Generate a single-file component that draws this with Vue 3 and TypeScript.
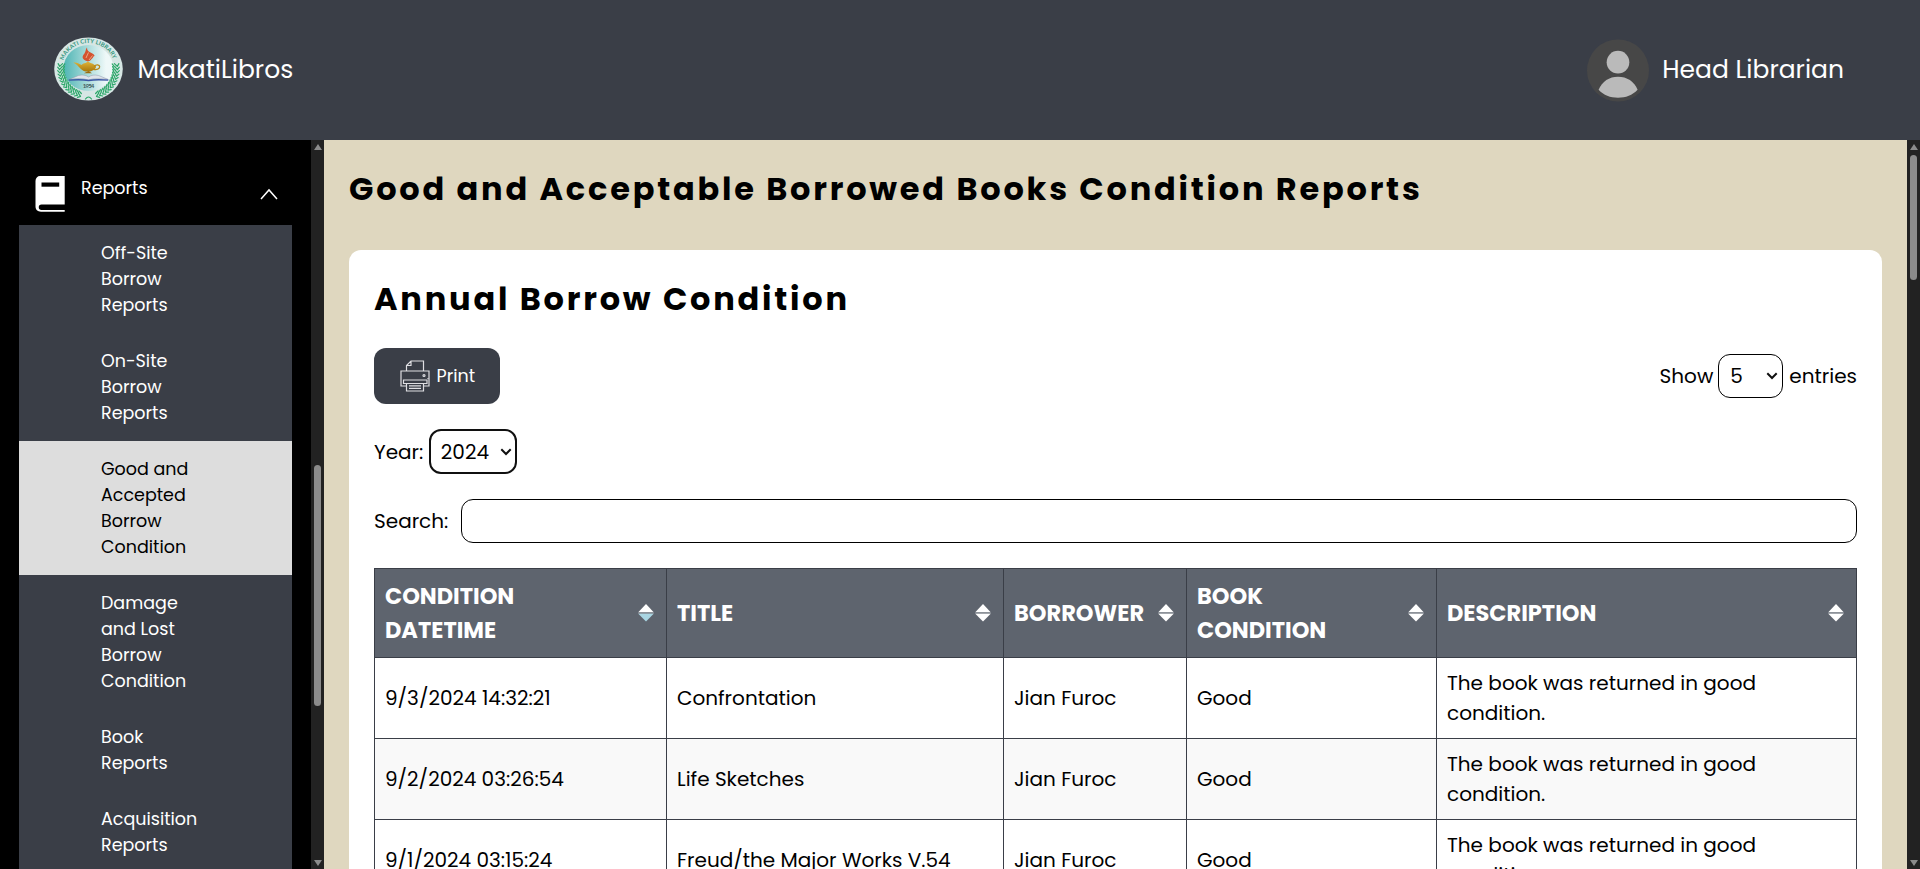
<script setup lang="ts">
import { ref } from 'vue'

interface MenuItem { lines: string[]; active?: boolean }
interface Column { key: string; lines: string[]; sorted?: boolean }
interface Row { date: string; title: string; borrower: string; condition: string }

const menu: MenuItem[] = [
  { lines: ['Off-Site', 'Borrow', 'Reports'] },
  { lines: ['On-Site', 'Borrow', 'Reports'] },
  { lines: ['Good and', 'Accepted', 'Borrow', 'Condition'], active: true },
  { lines: ['Damage', 'and Lost', 'Borrow', 'Condition'] },
  { lines: ['Book', 'Reports'] },
  { lines: ['Acquisition', 'Reports'] },
]

const columns: Column[] = [
  { key: 'date', lines: ['CONDITION', 'DATETIME'], sorted: true },
  { key: 'title', lines: ['TITLE'] },
  { key: 'borrower', lines: ['BORROWER'] },
  { key: 'condition', lines: ['BOOK', 'CONDITION'] },
  { key: 'description', lines: ['DESCRIPTION'] },
]

const rows: Row[] = [
  { date: '9/3/2024 14:32:21', title: 'Confrontation', borrower: 'Jian Furoc', condition: 'Good' },
  { date: '9/2/2024 03:26:54', title: 'Life Sketches', borrower: 'Jian Furoc', condition: 'Good' },
  { date: '9/1/2024 03:15:24', title: 'Freud/the Major Works V.54', borrower: 'Jian Furoc', condition: 'Good' },
]

const year = ref('2024')
const entries = ref('5')
const search = ref('')

// Leaves of the laurel on the seal: angle measured from the bottom centre.
const leaves = Array.from({ length: 13 }, (_, i) => 16 + i * 6.6)
</script>

<template>
  <div class="page">
    <header class="topbar">
      <div class="brand">
        <svg class="seal" viewBox="0 0 68 64" preserveAspectRatio="none">
          <defs>
            <linearGradient id="seal-disc" x1="0" x2="1">
              <stop offset="0" stop-color="#4fb5b4" />
              <stop offset="0.85" stop-color="#eef8f8" />
            </linearGradient>
            <linearGradient id="lamp" x1="0" y1="0" x2="0" y2="1">
              <stop offset="0" stop-color="#e0b53a" />
              <stop offset="1" stop-color="#a8770b" />
            </linearGradient>
            <path id="seal-arc" d="M9.400 23.500 A26 25.500 0 0 1 58.800 23.500" />
          </defs>
          <ellipse cx="34" cy="32" rx="33.8" ry="31.6" fill="#d6e6e4" />
          <ellipse cx="34" cy="31" rx="24.5" ry="23" fill="url(#seal-disc)" />
          <text class="seal-name">
            <textPath href="#seal-arc" textLength="63">MAKATI CITY LIBRARY</textPath>
          </text>
          <g stroke="#2ba768" stroke-width="1.2" stroke-linecap="round">
            <g v-for="a in leaves" :key="a">
              <g :transform="`rotate(${a} 34 32)`"><path d="M34 60.500l-3-2.600M34 60.500l-2.600 1.800M34 57.500l-3-1.800" /></g>
              <g :transform="`rotate(${-a} 34 32)`"><path d="M34 60.500l3-2.600M34 60.500l2.600 1.800M34 57.500l3-1.800" /></g>
            </g>
            <path d="M31 62q3-4 6 0" fill="none" />
          </g>
          <path d="M33.500 24.500c-6-2-6.500-4.500-3.500-8 1.500-2.500 1-4.500 2.500-6 0 3 1.500 4 3.500 5 3 1.500 3.500 2 4 3.500-1.500 0-1 1.500-3 3-1 1.500-2 2-3.500 2.500z" fill="#d4522f" />
          <path d="M31.500 21l2.500-5.500M34.500 23l3.500-4.500" stroke="#f4c9a8" stroke-width=".7" />
          <path d="M19 25.500c3.500-.5 5 .6 8 2.500q2-2 4-2l2.500-1.500 2.500 1.500q2.500.5 4 2c2.500 1 1.500 4-1.500 5.200q-1.500 1-3 1.300H31c-5-1-6-6-12-9z" fill="url(#lamp)" />
          <path d="M39.500 29.500c2-2.500 5.500-2 5.500.3s-3 3.200-6 2.500" fill="none" stroke="#b88717" stroke-width="1.300" />
          <path d="M29.500 36.300h8l-3.500-2.300z" fill="#9c6b10" />
          <path d="M15 42.500l9-4q6-1.500 10 1.500 4-3 10-1.500l9.500 4q-12-2-19.500.5-8-2.500-19-.5z" fill="#dfe3ea" stroke="#8f98ad" stroke-width=".5" />
          <path d="M14.500 43.200q12-1 19.500.3 8-1.300 19.500-.3" fill="none" stroke="#3a55a4" stroke-width="1.300" />
          <text x="28.300" y="51.500" class="seal-year" textLength="11.500">1954</text>
        </svg>
        <span class="name">MakatiLibros</span>
      </div>
      <div class="account">
        <svg class="avatar" viewBox="0 0 64 64">
          <circle cx="32" cy="32" r="31.500" fill="#474747" />
          <circle cx="32" cy="23.500" r="11.500" fill="#bababa" />
          <path d="M12.300 51.500C16 43 23 38.300 32 38.300s16.500 4.700 19.900 13.200C46.500 57 40 59.600 32 59.600S17.500 57 12.300 51.500z" fill="#bababa" />
        </svg>
        <span class="name">Head Librarian</span>
      </div>
    </header>

    <div class="body">
      <aside class="sidebar">
        <div class="section">
          <svg class="book" viewBox="0 0 30 36">
            <path d="M5 0H29.700V28.500H6.500a2.700 2.700 0 0 0 0 5.500H29.700V35.700H6C2.500 35.700.5 33.500.5 30.500V5C.5 2 2.500 0 5 0z" fill="#fff" />
            <path d="M6.500 6.500h17.700v4.200H6.500z" />
          </svg>
          <span class="section-name">Reports</span>
          <svg class="chevron" viewBox="0 0 18 12"><path d="M1 11l8-9 8 9" fill="none" stroke="#fff" stroke-width="1.500" /></svg>
        </div>
        <nav class="menu">
          <a v-for="(item, i) in menu" :key="i" class="menu-item" :class="{ active: item.active }">
            <span v-for="line in item.lines" :key="line">{{ line }}</span>
          </a>
        </nav>
      </aside>
      <div class="scrollbar side-scroll">
        <i class="arrow up"></i><b class="thumb"></b><i class="arrow down"></i>
      </div>

      <main class="content">
        <h1 class="heading">Good and Acceptable Borrowed Books Condition Reports</h1>
        <section class="card">
          <h2 class="heading">Annual Borrow Condition</h2>
          <div class="tools">
            <button class="print">
              <svg class="printer" viewBox="0 0 30 32" fill="none" stroke="#dedee2" stroke-width="1.200">
                <path d="M6.500 11V5.500L11 1h12.500v10M6.500 5.500H11V1" />
                <path d="M6.500 26H1V11h28v15h-5.500" />
                <path d="M3.500 20h23.500v3.500H3.500z" />
                <path d="M6.500 23.500h17V31h-17zM9 25.800h12M9 28.400h12" />
                <circle cx="24" cy="15.500" r="1" />
                <path d="M28 18v1" />
              </svg>
              <span>Print</span>
            </button>
            <label class="show">
              <span class="show-word">Show</span>
              <span class="picker entries">
                <select v-model="entries"><option>5</option><option>10</option><option>25</option></select>
                <svg class="caret" viewBox="0 0 12 8"><path d="M1.300 1.300L6 6l4.700-4.700" fill="none" stroke="#101010" stroke-width="2" /></svg>
              </span>
              <span class="entries-word">entries</span>
            </label>
          </div>
          <label class="year-row">
            <span class="year-word">Year:</span>
            <span class="picker year">
              <select v-model="year"><option>2024</option></select>
              <svg class="caret" viewBox="0 0 12 8"><path d="M1.300 1.300L6 6l4.700-4.700" fill="none" stroke="#101010" stroke-width="2" /></svg>
            </span>
          </label>
          <label class="search-row">
            <span class="search-word">Search:</span>
            <input v-model="search" class="search" type="text" />
          </label>
          <table class="table">
            <colgroup><col v-for="c in columns" :key="c.key" :class="'col-' + c.key" /></colgroup>
            <thead>
              <tr>
                <th v-for="c in columns" :key="c.key">
                  <div class="th">
                    <span class="th-label"><span v-for="l in c.lines" :key="l">{{ l }}</span></span>
                    <svg class="sort" viewBox="0 0 16 18">
                      <path d="M8 0l7.700 8.200H.3z" fill="#fff" />
                      <path d="M.3 8.200h15.400v1.600H.3z" fill="#8f949c" />
                      <path d="M8 17.500L.3 9.800h15.400z" :fill="c.sorted ? '#a9d5e2' : '#fff'" />
                    </svg>
                  </div>
                </th>
              </tr>
            </thead>
            <tbody>
              <tr v-for="r in rows" :key="r.date">
                <td>{{ r.date }}</td>
                <td>{{ r.title }}</td>
                <td>{{ r.borrower }}</td>
                <td>{{ r.condition }}</td>
                <td>The book was returned in good<br />condition.</td>
              </tr>
            </tbody>
          </table>
        </section>
      </main>
      <div class="scrollbar main-scroll">
        <i class="arrow up"></i><b class="thumb"></b><i class="arrow down"></i>
      </div>
    </div>
  </div>
</template>

<style>
body { margin: 0; overflow: hidden; }
</style>

<style scoped>
* { box-sizing: border-box; }
.page {
  display: flex; flex-direction: column; width: 100%; height: 100vh; overflow: hidden;
  font-family: Poppins, Inter, "Liberation Sans", sans-serif;
  font-size: 20px; line-height: 30px; color: #000;
}
.topbar {
  flex: none; display: flex; align-items: center; justify-content: space-between;
  height: 140px; padding: 0 76px 2px 54px; background: #3a3e47; color: #fff;
}
.brand, .account { display: flex; align-items: center; font-size: 25px; line-height: 38px; }
.brand { gap: 14.500px; }
.account { gap: 12px; }
.name { padding-top: 2px; }
.seal { width: 69px; height: 64px; }
.seal-name { font: 700 5.800px Lato, sans-serif; fill: #35967f; }
.seal-year { font: 700 6px Lato, sans-serif; fill: #3e5a5c; }
.avatar { width: 64px; height: 63px; margin-top: 2px; }

.body { flex: 1; display: flex; min-height: 0; }
.sidebar { width: 311px; background: #000; color: #fff; font-size: 17.500px; line-height: 26px; overflow: hidden; }
.section { display: flex; height: 85px; padding: 35px 33px 0 35px; }
.book { width: 30px; height: 36px; margin-top: 1px; }
.section-name { margin-left: 16px; }
.chevron { width: 18px; height: 12px; margin: 13px 0 0 auto; }
.menu { margin: 0 19px; background: #3a3e47; height: 700px; }
.menu-item { display: flex; flex-direction: column; padding: 15px 0 15px 82px; }
.menu-item.active { background: #ddd; color: #000; }

.scrollbar { flex: none; display: flex; flex-direction: column; align-items: center; width: 13px; padding: 4px 0 3px; background: #222; }
.arrow { width: 0; height: 0; border: 4.500px solid transparent; }
.up { border-top: 0; border-bottom: 6px solid #8b8b8b; }
.down { margin-top: auto; border-bottom: 0; border-top: 6px solid #8b8b8b; }
.thumb { width: 7px; border-radius: 4px; background: #8b8b8b; }
.side-scroll .thumb { margin-top: 315px; height: 241px; }
.main-scroll .thumb { margin-top: 5px; height: 125px; }

.content { flex: 1; min-width: 0; padding: 25px 25px 0; background: #dfd7bf; overflow: hidden; }
.heading { margin: 0; font-size: 32px; line-height: 48px; font-weight: 700; letter-spacing: 2.780px; white-space: nowrap; }
.card { margin-top: 37px; padding: 25px; border-radius: 12px; background: #fff; }
.tools { display: flex; justify-content: space-between; align-items: center; margin-top: 25px; }
.print {
  display: flex; align-items: center; gap: 6.500px; width: 126px; height: 56px; padding: 0 0 0 26px; border: 0; border-radius: 12px;
  background: #3a3e47; color: #fff; font: inherit; font-size: 17.500px; line-height: 26px;
}
.printer { width: 30px; height: 32px; }
.show { display: flex; align-items: center; }
.picker { display: grid; align-items: center; }
.picker select, .caret { grid-area: 1 / 1; }
.caret { justify-self: end; width: 12px; height: 8px; margin-right: 5px; pointer-events: none; }
select { appearance: none; width: 100%; height: 100%; border-radius: 12px; background: #fff; color: #000; font: inherit; }
.entries { width: 65px; height: 44px; margin: 0 6px 0 5px; }
.entries select { padding: 0 11px; border: 1px solid #000; }
.year-row { display: flex; align-items: center; margin-top: 25px; }
.year { width: 88px; height: 45px; margin-left: 6px; }
.year select { padding: 0 9.500px; border: 2px solid #101010; }
.search-row { display: flex; align-items: center; margin-top: 25px; }
.search { flex: 1; height: 44px; margin-left: 13px; padding: 0 12px; border: 1px solid #000; border-radius: 12px; font: inherit; }

.table { width: 100%; margin-top: 25px; table-layout: fixed; border-collapse: collapse; }
.col-date { width: 292px; }
.col-title { width: 337px; }
.col-borrower { width: 183px; }
.col-condition { width: 250px; }
th, td { border: 1px solid #3a3e47; text-align: left; white-space: nowrap; }
th { height: 89px; padding: 0 12px 0 10px; background: #5e646e; color: #fff; font-size: 22.500px; line-height: 34px; }
.th { display: flex; align-items: center; justify-content: space-between; }
.th-label { display: flex; flex-direction: column; }
.sort { flex: none; width: 16px; height: 18px; }
td { height: 81px; padding: 0 10px; }
tbody tr:nth-child(even) { background: #f9f9f9; }
</style>
